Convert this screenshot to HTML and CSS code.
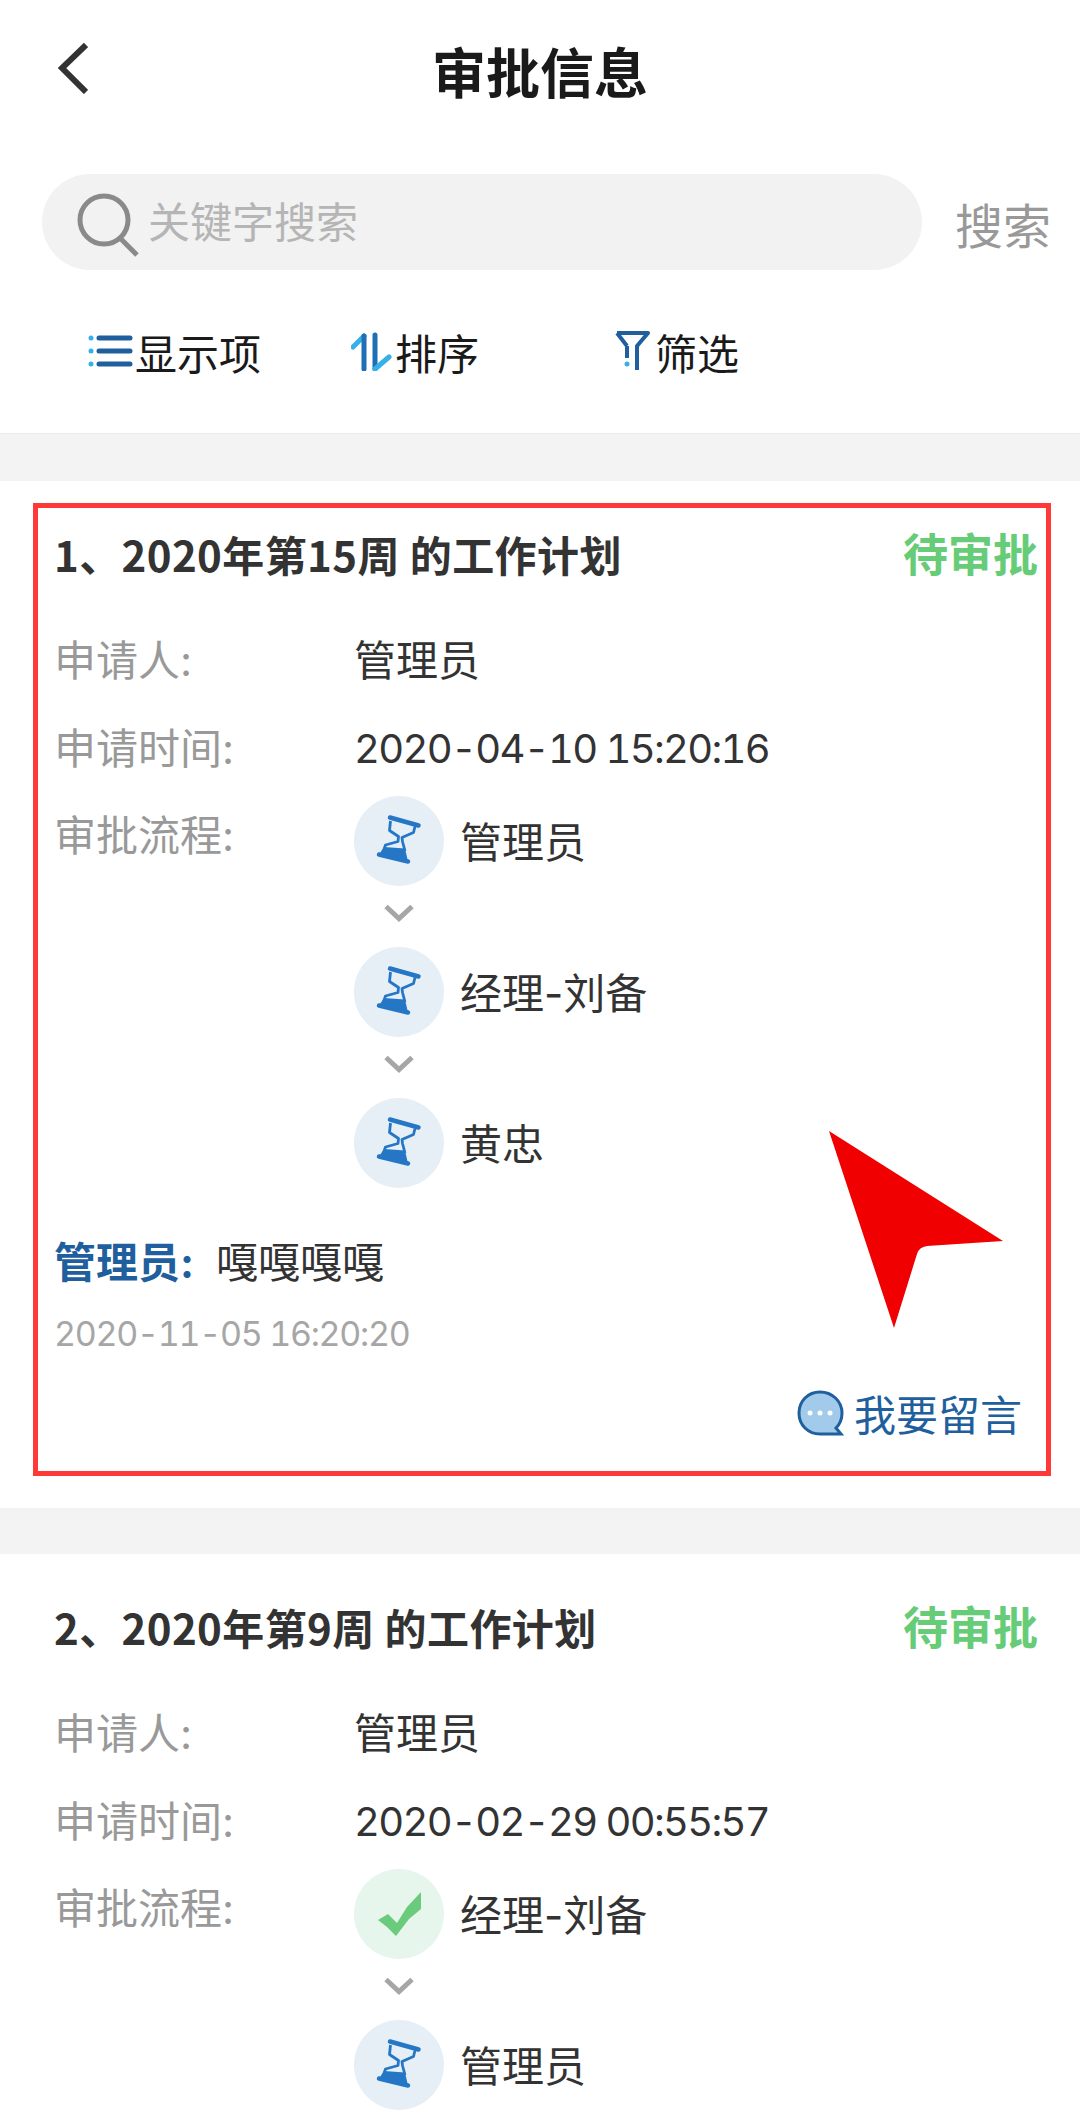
FILE: index.html
```html
<!DOCTYPE html>
<html lang="zh-CN">
  <head>
    <meta charset="UTF-8" />
    <meta name="viewport" content="width=device-width, initial-scale=1.0" />
    <title>审批信息</title>
    <link rel="stylesheet" href="styles.css">
  </head>
  <body>
    <svg class="defs" width="0" height="0">
      <symbol id="hourglass" viewBox="0 0 90 90">
        <path d="M25 58.500L54 65.500M36 21.500L64.500 29.500" stroke="#2577c6" stroke-width="4.500" stroke-linecap="round" fill="none" />
        <path d="M36.500 25L35.500 34.500L44.500 40.500L44 45.500L31.500 49L29.500 55M61 30.500L59.500 36.500L48 41.500L48.500 45.500L51 55" stroke="#2577c6" stroke-width="2.800" stroke-linejoin="round" fill="none" />
        <path d="M30 51L51 52.500L54 65.500L25 58.500Z" fill="#2577c6" />
      </symbol>
      <symbol id="tick" viewBox="0 0 90 90">
        <path d="M24 51L34 45L43 54L53 38L67 23L67 40L55 50L42 67L33 58Z" fill="#6bcb7c" />
      </symbol>
      <symbol id="chevron" viewBox="0 0 30 18">
        <path d="M2 2.500L15 14.500L28 2.500" stroke="#a6a6a6" stroke-width="5" fill="none" />
      </symbol>
    </svg>

    <header class="topbar">
      <svg class="back-icon" width="30" height="52" viewBox="0 0 30 52">
        <path d="M28 3L4 26L28 50" stroke="#333" stroke-width="6" fill="none" />
      </svg>
      <h1>审批信息</h1>
    </header>

    <div class="search-row">
      <div class="search-box">
        <svg class="search-icon" width="62" height="64" viewBox="0 0 62 64">
          <circle cx="27" cy="27" r="24" stroke="#8a8a8a" stroke-width="5" fill="none" />
          <path d="M43 45L60 62" stroke="#8a8a8a" stroke-width="5" fill="none" />
        </svg>
        <span class="placeholder">关键字搜索</span>
      </div>
      <span class="search-button">搜索</span>
    </div>

    <div class="toolbar">
      <div class="tool">
        <svg width="46" height="40" viewBox="0 0 46 40">
          <circle cx="3" cy="7" r="2.500" fill="#35b0e8" />
          <circle cx="3" cy="20" r="2.500" fill="#35b0e8" />
          <circle cx="3" cy="33" r="2.500" fill="#35b0e8" />
          <path d="M11 7H42M11 20H42M11 33H42" stroke="#1f5f9e" stroke-width="5" stroke-linecap="round" />
        </svg>
        <span>显示项</span>
      </div>
      <div class="tool">
        <svg width="43" height="40" viewBox="0 0 43 40">
          <path d="M2 16L13 5" stroke="#35b0e8" stroke-width="5" stroke-linecap="round" />
          <path d="M13 5V38M24 4V38" stroke="#1f6fb5" stroke-width="5" stroke-linecap="round" />
          <path d="M24 38L38 26" stroke="#35b0e8" stroke-width="5" stroke-linecap="round" />
        </svg>
        <span>排序</span>
      </div>
      <div class="tool">
        <svg width="40" height="42" viewBox="0 0 40 42">
          <path d="M3 3H34L23 16V40M13 16V28M3 3L13 16" stroke="#1f5f9e" stroke-width="4" stroke-linejoin="round" fill="none" />
          <circle cx="13" cy="34" r="2.500" fill="#35b0e8" />
        </svg>
        <span>筛选</span>
      </div>
    </div>

    <section class="card">
      <div class="card-head">
        <h2>1、2020年第15周 的工作计划</h2>
        <span class="status">待审批</span>
      </div>
      <div class="row"><span class="label">申请人:</span><span>管理员</span></div>
      <div class="row"><span class="label">申请时间:</span><span class="time">2020-04-10 15:20:16</span></div>
      <div class="flow-row">
        <span class="label flow-label">审批流程:</span>
        <div class="flow">
          <div class="step">
            <svg class="step-icon pending"><use href="#hourglass" /></svg>
            <span>管理员</span>
          </div>
          <svg class="arrow"><use href="#chevron" /></svg>
          <div class="step">
            <svg class="step-icon pending"><use href="#hourglass" /></svg>
            <span>经理-刘备</span>
          </div>
          <svg class="arrow"><use href="#chevron" /></svg>
          <div class="step">
            <svg class="step-icon pending"><use href="#hourglass" /></svg>
            <span>黄忠</span>
          </div>
        </div>
      </div>
      <p class="comment"><b>管理员:</b><span>嘎嘎嘎嘎</span></p>
      <p class="comment-date">2020-11-05 16:20:20</p>
      <div class="reply">
        <svg width="48" height="48" viewBox="0 0 48 48">
          <path d="M24 2C12 2 3 11 3 23C3 35 12 44 24 44H45L40 38C44 34 46 29 46 23C46 11 36 2 24 2Z" fill="#a2cbeb" stroke="#1f5f9e" stroke-width="3" />
          <circle cx="14" cy="23" r="2.500" fill="#fff" />
          <circle cx="24" cy="23" r="2.500" fill="#fff" />
          <circle cx="34" cy="23" r="2.500" fill="#fff" />
        </svg>
        <span>我要留言</span>
      </div>

      <!-- annotation drawn over the first card -->
      <div class="mark"></div>
      <svg class="pointer" width="176" height="200" viewBox="0 0 176 200">
        <path d="M1 1L175 111L99 116Q91 117 89 124L66 198Z" fill="#f00000" />
      </svg>
    </section>

    <section class="card">
      <div class="card-head">
        <h2>2、2020年第9周 的工作计划</h2>
        <span class="status">待审批</span>
      </div>
      <div class="row"><span class="label">申请人:</span><span>管理员</span></div>
      <div class="row"><span class="label">申请时间:</span><span class="time">2020-02-29 00:55:57</span></div>
      <div class="flow-row">
        <span class="label flow-label">审批流程:</span>
        <div class="flow">
          <div class="step">
            <svg class="step-icon done"><use href="#tick" /></svg>
            <span>经理-刘备</span>
          </div>
          <svg class="arrow"><use href="#chevron" /></svg>
          <div class="step">
            <svg class="step-icon pending"><use href="#hourglass" /></svg>
            <span>管理员</span>
          </div>
        </div>
      </div>
    </section>
  </body>
</html>
```

FILE: styles.css
```css
html,
body {
  height: 2120px;
  overflow: hidden;
}
body {
  margin: 0;
  background-color: #f3f3f3;
  font-family: Inter, "Noto Sans CJK SC", sans-serif;
  font-size: 42px;
  line-height: 1.2;
  color: #333;
}
.defs {
  position: absolute;
}
.topbar {
  position: relative;
  height: 144px;
  padding-bottom: 1px;
  box-sizing: border-box;
  background-color: white;
  display: flex;
  align-items: center;
  justify-content: center;
}
.topbar h1 {
  margin: 0;
  font-family: "Noto Sans CJK SC", sans-serif;
  font-size: 54px;
  font-weight: 700;
  color: #1a1a1a;
}
.back-icon {
  position: absolute;
  left: 58px;
  top: 42px;
}
.search-row {
  display: flex;
  align-items: center;
  padding: 30px 28px 0 42px;
  background-color: white;
}
.search-box {
  width: 880px;
  height: 96px;
  border-radius: 48px;
  background-color: #f2f2f2;
  display: flex;
  align-items: center;
  padding-left: 35px;
  box-sizing: border-box;
}
.search-icon {
  margin-right: 9px;
  margin-top: 5px;
}
.placeholder {
  font-size: 42px;
  color: #b5b5b5;
  margin-top: 2px;
}
.search-button {
  margin-left: 33px;
  margin-top: 10px;
  font-size: 48px;
  color: #999;
}
.toolbar {
  height: 164px;
  padding-left: 88px;
  background-color: white;
  display: grid;
  grid-template-columns: repeat(3, 263px);
  align-items: center;
  border-bottom: 1px solid #ebebeb;
  box-sizing: border-box;
}
.tool {
  display: flex;
  align-items: center;
  gap: 1px;
  font-size: 42px;
  color: #1a1a1a;
}
.tool span {
  padding-top: 8px;
}
.card {
  position: relative;
  margin-top: 47px;
  padding: 40px 42px 69px 54px;
  background-color: white;
}
.card + .card {
  margin-top: 46px;
}
.card-head {
  display: flex;
  align-items: center;
  justify-content: space-between;
  height: 70px;
}
.card-head h2 {
  margin: 0 0 3px;
  font-family: "Noto Sans CJK SC", sans-serif;
  font-size: 42px;
  font-weight: 700;
  letter-spacing: 0.4px;
}
.status {
  font-size: 45px;
  font-weight: 700;
  color: #66cc77;
}
.row {
  display: flex;
  align-items: center;
  height: 88px;
}
.card-head + .row {
  margin-top: 26px;
}
.label {
  width: 300px;
  box-sizing: border-box;
  color: #999;
}
.time {
  font-size: 40px;
  font-variant-numeric: tabular-nums;
  letter-spacing: -1.7px;
}
.flow-row {
  display: flex;
  margin-top: 3px;
}
.flow-label {
  line-height: 80px;
}
.flow {
  display: flex;
  flex-direction: column;
}
.step {
  display: flex;
  align-items: center;
  gap: 16px;
}
.step span {
  padding-top: 4px;
}
.step-icon {
  width: 90px;
  height: 90px;
  border-radius: 50%;
}
.step-icon.pending {
  background-color: #e6eef6;
}
.step-icon.done {
  background-color: #e6f6ec;
}
.arrow {
  display: block;
  width: 30px;
  height: 18px;
  margin: 18px 0 25px 30px;
}
.comment {
  margin: 45px 0 0;
  line-height: 60px;
  display: flex;
  gap: 22px;
}
.comment b {
  color: #1f5f9e;
}
.comment-date {
  margin: 16px 0 0;
  line-height: 50px;
  font-size: 34px;
  font-variant-numeric: tabular-nums;
  letter-spacing: -1.3px;
  color: #a6a6a6;
}
.reply {
  display: flex;
  justify-content: flex-end;
  align-items: center;
  gap: 10px;
  height: 50px;
  margin: 30px 16px 0 0;
  color: #1f5f9e;
}
.reply span {
  padding-top: 4px;
}
.mark {
  position: absolute;
  left: 33px;
  top: 22px;
  width: 1018px;
  height: 973px;
  box-sizing: border-box;
  border: 5px solid #ff3838;
}
.pointer {
  position: absolute;
  left: 828px;
  top: 649px;
}
```
